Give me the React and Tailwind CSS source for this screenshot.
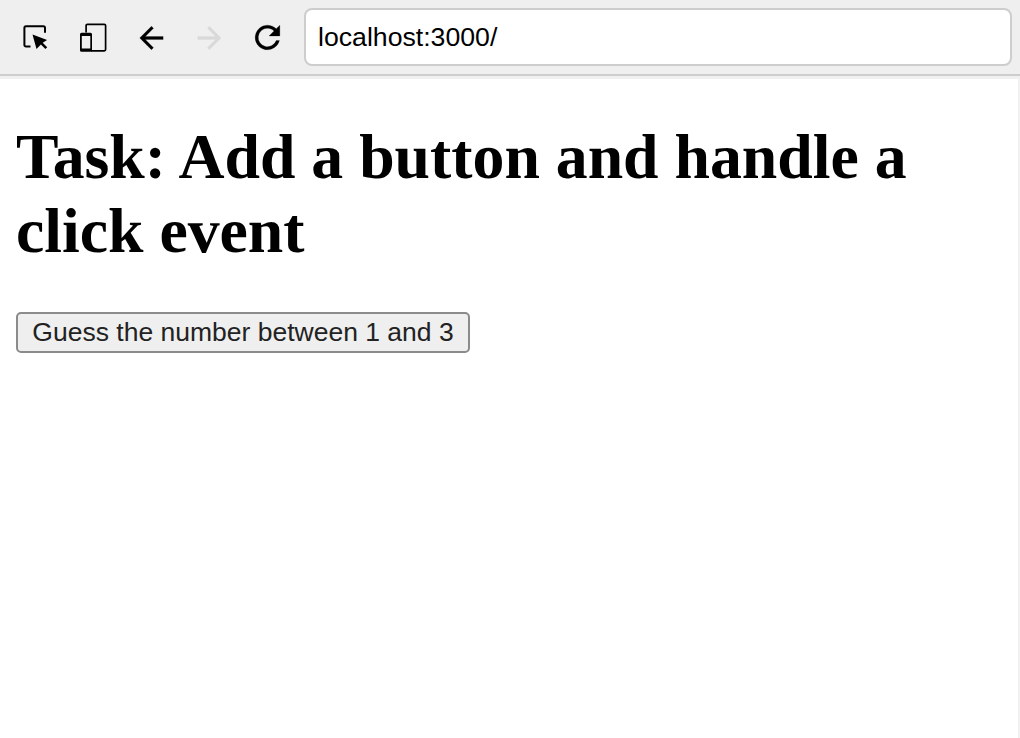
function InspectIcon() {
  return (
    <svg className="h-9 w-9" viewBox="-0.5 1.7 36 36" fill="none">
      <path d="M13 28.3H8.5a1.6 1.6 0 0 1-1.6-1.6V9.6a1.6 1.6 0 0 1 1.6-1.6h17.4a1.6 1.6 0 0 1 1.6 1.6v4.9" stroke="#000" strokeWidth="2" />
      <path d="M15 16.2 29.6 21.7 25.2 24.4 29.7 28.9 27.9 30.7 23.4 26.2 19 30.8z" fill="#000" />
    </svg>
  );
}

function DevicesIcon() {
  return (
    <svg className="h-9 w-9" viewBox="0 1.5 36 36" fill="none">
      <path d="M11.1 14V7.1a1.3 1.3 0 0 1 1.3-1.3h16.9a1.3 1.3 0 0 1 1.3 1.3v23.9a1.3 1.3 0 0 1-1.3 1.3H16" stroke="#000" strokeWidth="1.7" />
      <path fillRule="evenodd" d="M6.5 14.2h9a1.5 1.5 0 0 1 1.5 1.5v16a1.5 1.5 0 0 1-1.5 1.5h-9a1.5 1.5 0 0 1-1.5-1.5v-16a1.5 1.5 0 0 1 1.5-1.5zM6.8 17.4v12.5h8.5v-12.5z" fill="#000" />
    </svg>
  );
}

function ArrowIcon({ forward = false }) {
  return (
    <svg className="h-9 w-9" viewBox="-0.6 -0.3 24.6 24.6" fill="currentColor">
      <path d={forward
        ? "M12 4l-1.41 1.41L16.17 11H4v2h12.17l-5.58 5.59L12 20l8-8z"
        : "M20 11H7.83l5.59-5.59L12 4l-8 8 8 8 1.41-1.41L7.83 13H20v-2z"} stroke="currentColor" strokeWidth="0.15" />
    </svg>
  );
}

function ReloadIcon() {
  return (
    <svg className="h-[37px] w-[37px]" viewBox="0 0 24 24" fill="currentColor">
      <path d="M17.65 6.35A7.96 7.96 0 0 0 12 4a8 8 0 1 0 7.73 10h-2.08A6 6 0 1 1 12 6c1.66 0 3.14.69 4.22 1.78L13 11h7V4z" stroke="currentColor" strokeWidth="0.15" />
    </svg>
  );
}

export default function App() {
  return (
    <div className="flex h-[738px] w-[1020px] flex-col overflow-hidden bg-white text-black">
      <header className="flex h-[76px] shrink-0 items-start border-b-2 border-[#cdcdcd] bg-[#efefef] pt-2">
        <nav className="flex h-[58px] w-[304px] shrink-0 items-center gap-[22px] pl-[17px]">
          <button aria-label="Inspect" className="pt-px"><InspectIcon /></button>
          <button aria-label="Devices" className="pt-px"><DevicesIcon /></button>
          <button aria-label="Back" className="pt-px"><ArrowIcon /></button>
          <button aria-label="Forward" className="pt-px text-[#d9d9d9]" disabled><ArrowIcon forward /></button>
          <button aria-label="Reload" className="pt-px"><ReloadIcon /></button>
        </nav>
        <div className="flex h-[58px] w-[708px] items-center rounded-lg border-2 border-[#cdcdcd] bg-white pl-3 font-['Liberation_Sans',Arial,sans-serif] text-[26.67px]">
          localhost:3000/
        </div>
      </header>
      <main className="flex-1 border-t-3 border-r-2 border-[#f0f0f0] px-4">
        <h1 className="pt-[41px] font-['Liberation_Serif','Times_New_Roman',serif] text-[63.75px] leading-[74px] font-bold">
          Task: Add a button and handle a click event
        </h1>
        <button className="mt-11 flex h-[41px] w-[454px] items-center justify-center rounded-[5px] border-2 border-[#8b8b8b] bg-[#efefef] font-['Liberation_Sans',Arial,sans-serif] text-[26.5px] whitespace-nowrap text-[#222]">
          Guess the number between 1 and 3
        </button>
      </main>
    </div>
  );
}
